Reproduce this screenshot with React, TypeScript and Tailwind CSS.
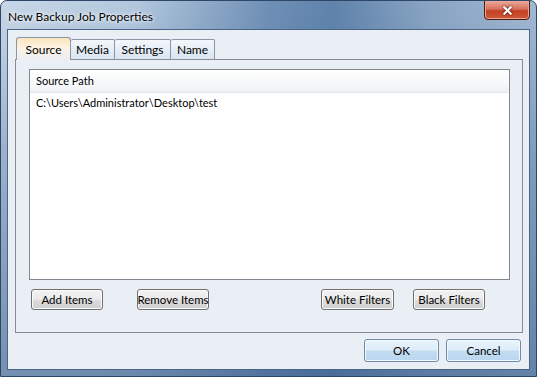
import { X } from "lucide-react"

const tabs = ["Source", "Media", "Settings", "Name"]

function Btn({ label, w, blue }: { label: string; w: string; blue?: boolean }) {
  return (
    <button
      className={`${w} flex items-center justify-center whitespace-nowrap rounded-[3px] border text-[11.5px] text-black ${
        blue
          ? "h-[23px] border-[#6c8cad] bg-[linear-gradient(#eaf4fc_0%,#dcecf9_48%,#c3dcf1_52%,#b9d6ef_100%)] shadow-[inset_0_0_0_1px_#f4f9fd]"
          : "h-[21px] border-[#707070] bg-[linear-gradient(#f2f2f2_0%,#ebebeb_48%,#dddddd_52%,#cfcfcf_100%)] shadow-[inset_0_0_0_1px_#fbfbfb]"
      }`}
    >
      {label}
    </button>
  )
}

export default function App() {
  return (
    <div
      className="w-[537px] h-[377px] flex flex-col overflow-hidden rounded-t-[7px] border border-[#2f4766] bg-[linear-gradient(180deg,rgba(70,105,150,0)_0%,rgba(70,105,150,0.35)_40%,rgba(60,95,140,0.6)_100%),linear-gradient(90deg,#c9d8e8_0%,#b3c8de_25%,#6f90b6_50%,#5f83ab_62%,#8aa5c4_80%,#a2b9d2_100%)]"
      style={{ fontFamily: 'Lato, "Noto Sans", sans-serif' }}
    >
      {/* Title bar */}
      <div className="h-[28px] flex items-start justify-between pl-[7px] pr-[6px]">
        <span className="mt-[7px] text-[12px] text-black [text-shadow:0_0_6px_#ffffff,0_0_3px_#ffffff]">
          New Backup Job Properties
        </span>
        <div className="w-[46px] h-[20px] -mt-px flex items-center justify-center rounded-b-[4px] border border-[#4a1c14] bg-[linear-gradient(#e9a99b_0%,#d7705b_45%,#c23f22_55%,#d05a3b_100%)] shadow-[inset_0_0_0_1px_#eca593]">
          <X className="w-[13px] h-[13px] text-white drop-shadow-[0_0_1px_#3a0d05]" strokeWidth={4} />
        </div>
      </div>

      {/* Client area */}
      <div className="mx-[6px] h-[341px] border border-[#4a6585] bg-[#eaeef5] flex flex-col px-[7px]">
        {/* Tabs */}
        <div className="mt-[6px] h-[23px] flex items-end pl-px relative z-10">
          {tabs.map((t, i) =>
            i === 0 ? (
              <div
                key={t}
                className="h-[23px] w-[55px] border border-b-0 border-[#8a96a6] rounded-t-[3px] bg-[linear-gradient(#fbe4bd_0%,#fdf3e3_45%,#eaeef5_100%)] text-[12px] flex items-start justify-center pt-[3px] -mb-px"
              >
                {t}
              </div>
            ) : (
              <div
                key={t}
                className={`h-[20px] border border-b-0 border-l-0 border-[#8a96a6] rounded-t-[2px] bg-[linear-gradient(#f3f7fb_0%,#e6eef6_50%,#d9e5f1_100%)] text-[12px] flex items-center justify-center ${
                  i === 1 ? "w-[44px]" : i === 2 ? "w-[56px]" : "w-[44px]"
                }`}
              >
                {t}
              </div>
            )
          )}
        </div>

        {/* Tab panel */}
        <div className="h-[274px] w-[508px] border border-[#898c95] bg-[#eaeef5] flex flex-col px-[13px]">
          <div className="mt-[9px] h-[211px] w-[481px] border border-[#828790] bg-white flex flex-col">
            <div className="h-[23px] flex items-center pl-[6px] text-[11px] text-black border-b border-[#e3e7ec] bg-[linear-gradient(#ffffff_0%,#f6f8fa_60%,#eff2f5_100%)]">
              Source Path
            </div>
            <div className="h-[20px] flex items-center pl-[6px] text-[11px] text-black">
              C:\Users\Administrator\Desktop\test
            </div>
          </div>
          <div className="mt-[9px] flex items-center justify-between pl-[2px] pr-[24px]">
            <div className="flex gap-[34px]">
              <Btn label="Add Items" w="w-[72px]" />
              <Btn label="Remove Items" w="w-[72px]" />
            </div>
            <div className="flex gap-[19px]">
              <Btn label="White Filters" w="w-[73px]" />
              <Btn label="Black Filters" w="w-[72px]" />
            </div>
          </div>
        </div>

        {/* OK / Cancel */}
        <div className="mt-[6px] flex justify-end gap-[7px] pr-px">
          <Btn label="OK" w="w-[75px]" blue />
          <Btn label="Cancel" w="w-[75px]" blue />
        </div>
      </div>
    </div>
  )
}
